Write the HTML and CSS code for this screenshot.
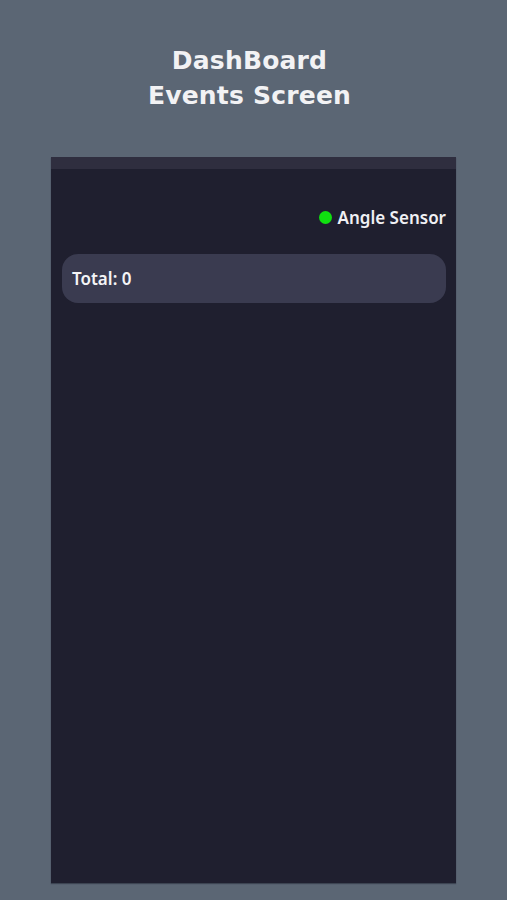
FILE: index.html
```html
<!DOCTYPE html>
<html>
<head>
<meta charset="utf-8">
<link rel="stylesheet" href="styles.css">
</head>
<body>
<header class="title">
  <div>DashBoard</div>
  <div>Events Screen</div>
</header>
<main class="phone">
  <div class="phone-top"></div>
  <div class="phone-body">
    <div class="status-row">
      <span class="dot"></span>
      <span class="status-label">Angle Sensor</span>
    </div>
    <div class="total-card">Total: 0</div>
  </div>
</main>
</body>
</html>
```
FILE: styles.css
```css
html, body {
  margin: 0;
  padding: 0;
}
body {
  width: 507px;
  height: 900px;
  background: #5b6674;
  overflow: hidden;
  display: flex;
  flex-direction: column;
  align-items: center;
}
.title {
  margin-top: 43px;
  padding-right: 8px;
  font-family: "DejaVu Sans", sans-serif;
  font-weight: bold;
  font-size: 25px;
  line-height: 35px;
  letter-spacing: 0.2px;
  color: #f2f2f4;
  text-align: center;
}
.phone {
  margin-top: 44px;
  width: 405px;
  height: 726px;
  background: #1f1f2f;
  display: flex;
  flex-direction: column;
  box-shadow: 0 1px 1px rgba(40,45,60,0.6);
}
.phone-top {
  height: 12px;
  background: #2f2e3f;
}
.phone-body {
  padding: 36px 10px 0 11px;
  display: flex;
  flex-direction: column;
}
.status-row {
  display: flex;
  justify-content: flex-end;
  align-items: center;
  gap: 6px;
  font-family: "Noto Sans", sans-serif;
  font-weight: 600;
  font-size: 17px;
  color: #f0f0f4;
  height: 24px;
}
.dot {
  width: 13px;
  height: 13px;
  border-radius: 50%;
  background: #10e010;
}
.total-card {
  margin-top: 25px;
  height: 49px;
  border-radius: 16px;
  background: #3a3b50;
  display: flex;
  align-items: center;
  padding-left: 10px;
  font-family: "Noto Sans", sans-serif;
  font-weight: 600;
  font-size: 17px;
  color: #f4f4f6;
}
```
